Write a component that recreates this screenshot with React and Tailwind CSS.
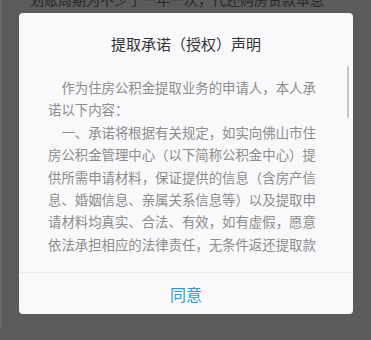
import React from "react";

export default function App() {
  return (
    <div
      className="relative w-[371px] h-[340px] overflow-hidden bg-[#5b5b5b]"
      style={{ fontFamily: '"Noto Sans CJK SC", "Noto Sans", sans-serif' }}
    >
      <div className="border-l-2 border-[#686868] h-full pl-[28px]">
        <p className="mt-[-12px] text-[14px] leading-[22px] text-[#262626] whitespace-nowrap">
          划账周期为不少于一年一次，代还购房贷款本息
        </p>
      </div>

      <div className="absolute left-[19px] top-[13px] w-[334px] h-[301px] rounded-[4px] bg-[#f9f9fb] flex flex-col">
        <div className="pt-[20px] pb-[11px] text-center text-[15px] leading-[22px] text-[#333333]">
          提取承诺（授权）声明
        </div>
        <div className="relative h-[191px] overflow-hidden">
          <div className="pl-[29px] pt-[10px] w-[299px] text-[13.4px] leading-[22.4px] text-[#8c8c8c]">
            <p className="indent-[1em]">作为住房公积金提取业务的申请人，本人承诺以下内容：</p>
            <p className="indent-[1em]">
              一、承诺将根据有关规定，如实向佛山市住房公积金管理中心（以下简称公积金中心）提供所需申请材料，保证提供的信息（含房产信息、婚姻信息、亲属关系信息等）以及提取申请材料均真实、合法、有效，如有虚假，愿意依法承担相应的法律责任，无条件返还提取款项。
            </p>
          </div>
          <div className="absolute left-[328px] top-0 w-[2px] h-[52px] rounded-full bg-[#c6c6c8]" />
        </div>
        <div className="mt-[15px] border-t border-[#ededef] flex-1 flex items-center justify-center text-[16px] text-[#2c9ad4]">
          同意
        </div>
      </div>
    </div>
  );
}
